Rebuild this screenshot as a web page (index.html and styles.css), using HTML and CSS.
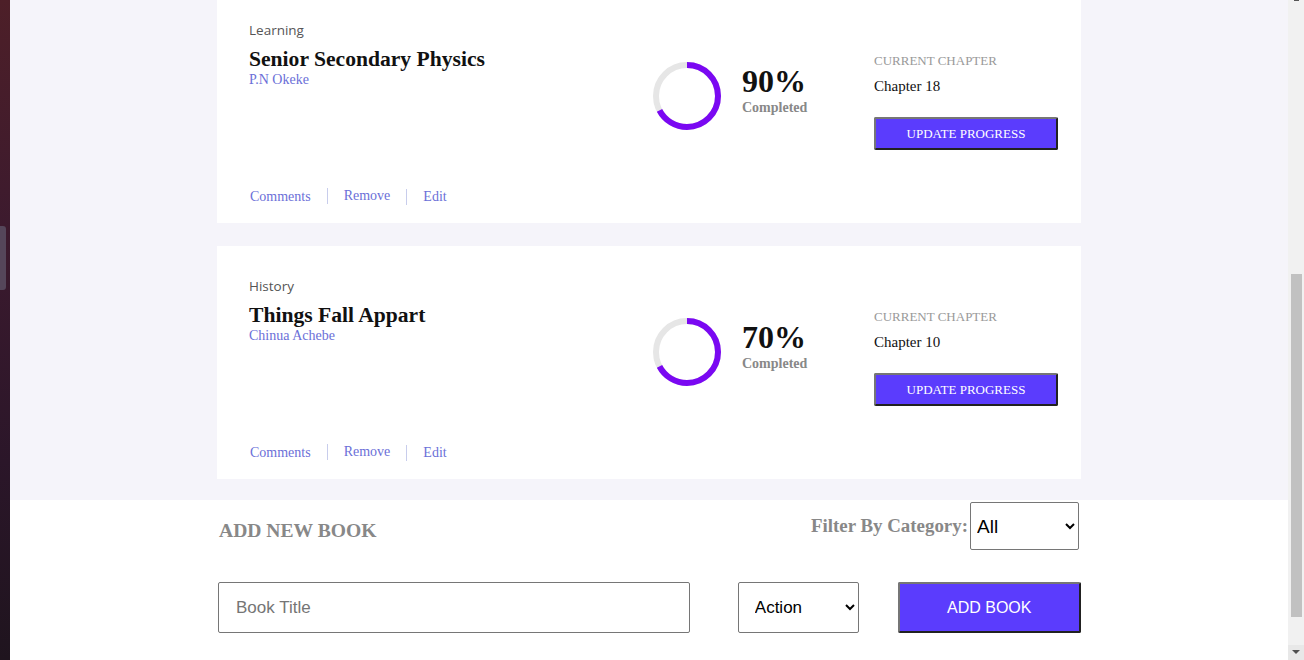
FILE: index.html
```html
<!DOCTYPE html>
<html lang="en">
<head>
<meta charset="utf-8">
<title>Bookshelf</title>
<link rel="stylesheet" href="styles.css">
</head>
<body>
<div class="desktop-edge"><div class="edge-tab"></div></div>
<main class="page">
  <section class="shelf">
    <article class="card card-first">
      <div class="card-top">
        <div class="info">
          <div class="category">Learning</div>
          <h2 class="title">Senior Secondary Physics</h2>
          <div class="author">P.N Okeke</div>
        </div>
        <div class="progress">
          <svg class="ring" width="68" height="68" viewBox="0 0 68 68">
            <circle cx="34" cy="34" r="31" fill="none" stroke="#e6e6e6" stroke-width="6"/>
            <circle cx="34" cy="34" r="31" fill="none" stroke="#7a08f2" stroke-width="6" stroke-dasharray="131 195" transform="rotate(-90 34 34)"/>
          </svg>
          <div class="pct">
            <div class="pct-value">90%</div>
            <div class="pct-label">Completed</div>
          </div>
        </div>
        <div class="chapter">
          <div class="chapter-label">CURRENT CHAPTER</div>
          <div class="chapter-name">Chapter 18</div>
          <button class="update-btn">UPDATE PROGRESS</button>
        </div>
      </div>
      <div class="links">
        <a class="link">Comments</a>
        <a class="link link-raised">Remove</a>
        <a class="link">Edit</a>
      </div>
    </article>
    <article class="card">
      <div class="card-top">
        <div class="info">
          <div class="category">History</div>
          <h2 class="title">Things Fall Appart</h2>
          <div class="author">Chinua Achebe</div>
        </div>
        <div class="progress">
          <svg class="ring" width="68" height="68" viewBox="0 0 68 68">
            <circle cx="34" cy="34" r="31" fill="none" stroke="#e6e6e6" stroke-width="6"/>
            <circle cx="34" cy="34" r="31" fill="none" stroke="#7a08f2" stroke-width="6" stroke-dasharray="131 195" transform="rotate(-90 34 34)"/>
          </svg>
          <div class="pct">
            <div class="pct-value">70%</div>
            <div class="pct-label">Completed</div>
          </div>
        </div>
        <div class="chapter">
          <div class="chapter-label">CURRENT CHAPTER</div>
          <div class="chapter-name">Chapter 10</div>
          <button class="update-btn">UPDATE PROGRESS</button>
        </div>
      </div>
      <div class="links">
        <a class="link">Comments</a>
        <a class="link link-raised">Remove</a>
        <a class="link">Edit</a>
      </div>
    </article>
  </section>
  <section class="add">
    <div class="add-head">
      <h3 class="add-title">ADD NEW BOOK</h3>
      <div class="filter">
        <label class="filter-label" for="filter">Filter By Category:</label>
        <select id="filter" class="filter-select"><option>All</option></select>
      </div>
    </div>
    <form class="add-form">
      <input class="book-input" type="text" placeholder="Book Title">
      <select class="cat-select"><option>Action</option></select>
      <button type="button" class="add-btn">ADD BOOK</button>
    </form>
  </section>
</main>
<div class="scrollbar">
  <div class="sb-cap"></div>
  <div class="sb-thumb"></div>
  <div class="sb-fill"></div>
  <div class="sb-down"><div class="sb-arrow"></div></div>
</div>
</body>
</html>
```

FILE: styles.css
```css
html, body {
  margin: 0;
  padding: 0;
}
body {
  display: flex;
  width: 1304px;
  height: 660px;
  overflow: hidden;
  background: #fff;
  font-family: "Liberation Serif", "Times New Roman", serif;
}
.desktop-edge {
  width: 10px;
  flex: none;
  background: linear-gradient(180deg, #4d1f28 0%, #3c1a2e 35%, #2b1629 70%, #1f141e 100%);
  padding-top: 226px;
  box-sizing: border-box;
}
.edge-tab {
  width: 6px;
  height: 64px;
  background: #55465a;
  border-radius: 0 3px 3px 0;
}
.page {
  flex: 1;
  min-width: 0;
  background: #fff;
  overflow: hidden;
}
.shelf {
  background: #f5f4fa;
  display: flex;
  flex-direction: column;
  align-items: center;
  gap: 23px;
  padding-bottom: 21px;
}
.card {
  width: 864px;
  height: 233px;
  box-sizing: border-box;
  background: #fff;
  padding: 0 23px 0 32px;
  display: flex;
  flex-direction: column;
}
.card-first {
  margin-top: -10px;
}
.card-top {
  display: grid;
  grid-template-columns: 404px 221px 184px;
}
.info {
  padding-top: 30px;
}
.category {
  font-family: "Open Sans", "Noto Sans", sans-serif;
  font-size: 13.5px;
  line-height: 20px;
  color: #555;
}
.title {
  margin: 7px 0 0;
  font-size: 21.6px;
  line-height: 24px;
  font-weight: bold;
  color: #111;
}
.author {
  margin-top: 1px;
  font-size: 14px;
  line-height: 16px;
  color: #6b6fd8;
}
.progress {
  margin-top: 72px;
  display: flex;
  align-items: flex-start;
}
.ring {
  display: block;
  flex: none;
}
.pct {
  margin-left: 21px;
  padding-top: 3px;
}
.pct-value {
  font-size: 32px;
  line-height: 32px;
  font-weight: bold;
  color: #111;
}
.pct-label {
  margin-top: 3px;
  font-size: 14px;
  line-height: 16px;
  font-weight: bold;
  color: #888;
}
.chapter {
  padding-top: 63px;
}
.chapter-label {
  font-size: 13px;
  line-height: 16px;
  color: #999;
}
.chapter-name {
  margin-top: 7px;
  font-size: 15px;
  line-height: 20px;
  color: #111;
}
.update-btn {
  display: block;
  margin-top: 21px;
  width: 184px;
  height: 33px;
  background: #5b3cfd;
  color: #fff;
  border: 2px outset #767676;
  border-radius: 2px;
  font-family: "Liberation Serif", serif;
  font-size: 13px;
  padding: 0;
}
.links {
  margin-top: 39px;
  display: flex;
  align-items: center;
  height: 16px;
}
.link {
  font-size: 14px;
  line-height: 16px;
  color: #6b6fd8;
  padding: 0 16px;
  border-left: 1px solid #c8cdec;
}
.link:first-child {
  padding-left: 1px;
  border-left: none;
}
.link-raised {
  position: relative;
  top: -1px;
}
.add {
  width: 864px;
  margin: 0 auto;
}
.add-head {
  margin-top: 2px;
  height: 48px;
  display: flex;
  justify-content: space-between;
  align-items: center;
}
.add-title {
  margin: 10px 0 0 2px;
  font-size: 19.6px;
  font-weight: bold;
  color: #888;
}
.filter {
  display: flex;
  align-items: center;
  margin-right: 2px;
}
.filter-label {
  font-size: 18.9px;
  font-weight: bold;
  color: #888;
  margin-right: 2px;
}
.filter-select {
  width: 109px;
  height: 48px;
  border: 1px solid #767676;
  border-radius: 2px;
  background: #fff;
  color: #000;
  font-family: "Liberation Sans", Arial, sans-serif;
  font-size: 19px;
  padding-left: 2px;
}
.add-form {
  margin: 32px 0 0 1px;
  display: flex;
  align-items: flex-start;
}
.book-input {
  width: 473px;
  height: 51px;
  box-sizing: border-box;
  border: 1px solid #767676;
  border-radius: 2px;
  padding: 0 17px;
  font-family: "Liberation Sans", Arial, sans-serif;
  font-size: 17px;
  color: #222;
}
.book-input::placeholder {
  color: #757575;
}
.cat-select {
  margin-left: 48px;
  width: 121px;
  height: 51px;
  border: 1px solid #767676;
  border-radius: 2px;
  background: #fff;
  color: #000;
  font-family: "Liberation Sans", Arial, sans-serif;
  font-size: 17px;
  padding-left: 12px;
}
.add-btn {
  margin-left: 39px;
  width: 184px;
  height: 51px;
  background: #5b3cfd;
  color: #fff;
  border: 2px outset #767676;
  border-radius: 2px;
  font-family: "Liberation Sans", Arial, sans-serif;
  font-size: 16px;
  padding: 0;
}
.scrollbar {
  width: 16px;
  flex: none;
  background: #f1f1f1;
  display: flex;
  flex-direction: column;
}
.sb-cap {
  margin-left: 6px;
  width: 5px;
  height: 1px;
  background: #555;
}
.sb-thumb {
  margin: 273px 0 0 3px;
  width: 11px;
  height: 343px;
  background: #c1c1c1;
}
.sb-fill {
  flex: 1;
}
.sb-down {
  height: 15px;
  background: #e8e8e8;
  display: flex;
  justify-content: center;
  padding-top: 5px;
  box-sizing: border-box;
}
.sb-arrow {
  width: 0;
  height: 0;
  border-left: 4px solid transparent;
  border-right: 4px solid transparent;
  border-top: 4px solid #505050;
}
```
